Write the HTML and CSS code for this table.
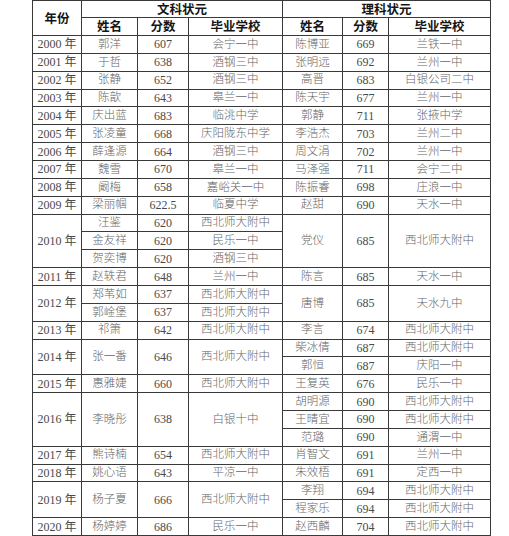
FILE: index.html
```html
<!DOCTYPE html>
<html lang="zh-CN">
<head>
<meta charset="utf-8">
<title>甘肃高考状元</title>
<link rel="stylesheet" href="styles.css">
</head>
<body>
<div class="sheet">
  <div class="c h r2">年份</div>
  <div class="c h s3 big">文科状元</div>
  <div class="c h s3 big">理科状元</div>
  <div class="c h">姓名</div><div class="c h">分数</div><div class="c h">毕业学校</div>
  <div class="c h">姓名</div><div class="c h">分数</div><div class="c h">毕业学校</div>

  <div class="c y">2000 年</div><div class="c">郭洋</div><div class="c n">607</div><div class="c">会宁一中</div><div class="c">陈博亚</div><div class="c n">669</div><div class="c">兰铁一中</div>
  <div class="c y">2001 年</div><div class="c">于哲</div><div class="c n">638</div><div class="c">酒钢三中</div><div class="c">张明远</div><div class="c n">692</div><div class="c">兰州一中</div>
  <div class="c y">2002 年</div><div class="c">张静</div><div class="c n">652</div><div class="c">酒钢三中</div><div class="c">高晋</div><div class="c n">683</div><div class="c">白银公司二中</div>
  <div class="c y">2003 年</div><div class="c">陈歆</div><div class="c n">643</div><div class="c">皋兰一中</div><div class="c">陈天宇</div><div class="c n">677</div><div class="c">兰州一中</div>
  <div class="c y">2004 年</div><div class="c">庆出蓝</div><div class="c n">683</div><div class="c">临洮中学</div><div class="c">郭静</div><div class="c n">711</div><div class="c">张掖中学</div>
  <div class="c y">2005 年</div><div class="c">张凌童</div><div class="c n">668</div><div class="c">庆阳陇东中学</div><div class="c">李浩杰</div><div class="c n">703</div><div class="c">兰州二中</div>
  <div class="c y">2006 年</div><div class="c">薛逢源</div><div class="c n">664</div><div class="c">酒钢三中</div><div class="c">周文涓</div><div class="c n">702</div><div class="c">兰州一中</div>
  <div class="c y">2007 年</div><div class="c">魏雪</div><div class="c n">670</div><div class="c">皋兰一中</div><div class="c">马泽强</div><div class="c n">711</div><div class="c">会宁二中</div>
  <div class="c y">2008 年</div><div class="c">阚梅</div><div class="c n">658</div><div class="c">嘉峪关一中</div><div class="c">陈振睿</div><div class="c n">698</div><div class="c">庄浪一中</div>
  <div class="c y">2009 年</div><div class="c">梁丽帼</div><div class="c n">622.5</div><div class="c">临夏中学</div><div class="c">赵甜</div><div class="c n">690</div><div class="c">天水一中</div>

  <div class="c y r3">2010 年</div><div class="c">汪鉴</div><div class="c n">620</div><div class="c">西北师大附中</div><div class="c r3">党仪</div><div class="c n r3">685</div><div class="c r3">西北师大附中</div>
  <div class="c">金友祥</div><div class="c n">620</div><div class="c">民乐一中</div>
  <div class="c">贺奕博</div><div class="c n">620</div><div class="c">酒钢三中</div>

  <div class="c y">2011 年</div><div class="c">赵轶君</div><div class="c n">648</div><div class="c">兰州一中</div><div class="c">陈言</div><div class="c n">685</div><div class="c">天水一中</div>

  <div class="c y r2">2012 年</div><div class="c">郑苇如</div><div class="c n">637</div><div class="c">西北师大附中</div><div class="c r2">唐博</div><div class="c n r2">685</div><div class="c r2">天水九中</div>
  <div class="c">郭崯堡</div><div class="c n">637</div><div class="c">西北师大附中</div>

  <div class="c y">2013 年</div><div class="c">祁箫</div><div class="c n">642</div><div class="c">西北师大附中</div><div class="c">李言</div><div class="c n">674</div><div class="c">西北师大附中</div>

  <div class="c y r2">2014 年</div><div class="c r2">张一番</div><div class="c n r2">646</div><div class="c r2">西北师大附中</div><div class="c">柴冰倩</div><div class="c n">687</div><div class="c">西北师大附中</div>
  <div class="c">郭恒</div><div class="c n">687</div><div class="c">庆阳一中</div>

  <div class="c y">2015 年</div><div class="c">惠雅婕</div><div class="c n">660</div><div class="c">西北师大附中</div><div class="c">王复英</div><div class="c n">676</div><div class="c">民乐一中</div>

  <div class="c y r3">2016 年</div><div class="c r3">李晓彤</div><div class="c n r3">638</div><div class="c r3">白银十中</div><div class="c">胡明源</div><div class="c n">690</div><div class="c">西北师大附中</div>
  <div class="c">王晴宜</div><div class="c n">690</div><div class="c">西北师大附中</div>
  <div class="c">范璐</div><div class="c n">690</div><div class="c">通渭一中</div>

  <div class="c y">2017 年</div><div class="c">熊诗楠</div><div class="c n">654</div><div class="c">西北师大附中</div><div class="c">肖智文</div><div class="c n">691</div><div class="c">兰州一中</div>
  <div class="c y">2018 年</div><div class="c">姚心语</div><div class="c n">643</div><div class="c">平凉一中</div><div class="c">朱效梧</div><div class="c n">691</div><div class="c">定西一中</div>

  <div class="c y r2">2019 年</div><div class="c r2">杨子夏</div><div class="c n r2">666</div><div class="c r2">西北师大附中</div><div class="c">李翔</div><div class="c n">694</div><div class="c">西北师大附中</div>
  <div class="c">程家乐</div><div class="c n">694</div><div class="c">西北师大附中</div>

  <div class="c y">2020 年</div><div class="c">杨婷婷</div><div class="c n">686</div><div class="c">民乐一中</div><div class="c">赵西麟</div><div class="c n">704</div><div class="c">西北师大附中</div>
</div>
</body>
</html>
```
FILE: styles.css
```css
html, body {
  margin: 0;
  padding: 0;
  background: #fff;
  overflow: hidden;
}

.sheet {
  margin-left: 32px;
  width: 459px;
  height: 536px;
  box-sizing: border-box;
  padding: 1px;
  gap: 1px;
  background: #3a3a3a;
  display: grid;
  grid-template-columns: 48px 55px 50px 93px 59px 45px 101px;
  grid-template-rows: 16px 17px repeat(28, 1fr);
}

.c {
  background: #fff;
  display: flex;
  align-items: center;
  justify-content: center;
  white-space: nowrap;
  font-family: "Liberation Serif", "Noto Sans CJK SC", serif;
  font-size: 11.5px;
  font-weight: 300;
  color: #666;
  line-height: 1;
}

.n, .y {
  font-size: 12px;
  font-weight: 400;
  color: #4a4a4a;
}

.h {
  font-family: "Noto Sans CJK SC", sans-serif;
  font-weight: 700;
  font-size: 12.5px;
  color: #151515;
}

.r2 { grid-row: span 2; }
.r3 { grid-row: span 3; }
.s3 { grid-column: span 3; }
```
